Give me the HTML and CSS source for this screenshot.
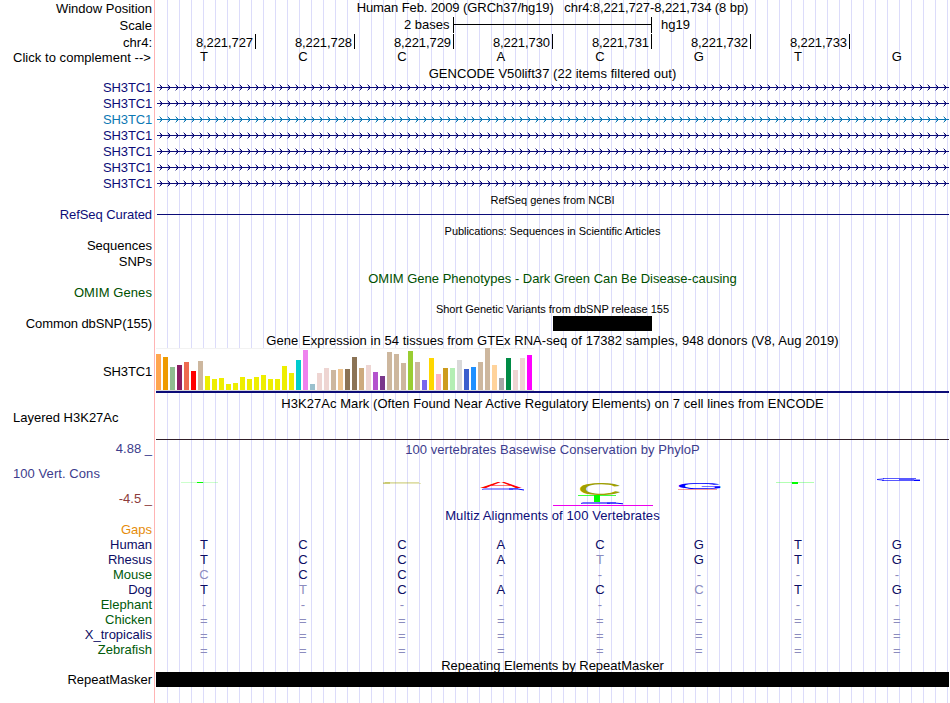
FILE: index.html
```html
<!DOCTYPE html>
<html lang="en">
<head>
<meta charset="utf-8">
<title>Genome Browser</title>
<link rel="stylesheet" href="styles.css">
</head>
<body>
<main class="browser">
  <div class="row position"><div class="label">Window Position</div><div class="plot title t-pos">Human Feb. 2009 (GRCh37/hg19)&nbsp;&nbsp; chr4:8,221,727-8,221,734 (8 bp)</div></div>
  <div class="row scale"><div class="label">Scale</div><div class="plot scale-plot"><span class="scale-size">2 bases</span><span class="scale-bar"></span><span>hg19</span></div></div>
  <div class="row ruler"><div class="label">chr4:</div><div class="plot ticks" id="ticks"></div></div>
  <div class="row bases"><div class="label t-click">Click to complement --&gt;</div><div class="plot cells" data-seq="TCCACGTG"></div></div>

  <div class="row head"><div class="label"></div><div class="plot title t-gencode">GENCODE V50lift37 (22 items filtered out)</div></div>
  <div id="genes"></div>

  <div class="row head refseq"><div class="label"></div><div class="plot title small">RefSeq genes from NCBI</div></div>
  <div class="row item navy"><div class="label t-refseq">RefSeq Curated</div><div class="plot"><div class="gene-line"></div></div></div>

  <div class="row head pubs"><div class="label"></div><div class="plot title small t-pubs">Publications: Sequences in Scientific Articles</div></div>
  <div class="row item"><div class="label">Sequences</div><div class="plot"></div></div>
  <div class="row item snps"><div class="label">SNPs</div><div class="plot"></div></div>

  <div class="row head omim green"><div class="label"></div><div class="plot title">OMIM Gene Phenotypes - Dark Green Can Be Disease-causing</div></div>
  <div class="row item green"><div class="label t-omim">OMIM Genes</div><div class="plot"></div></div>

  <div class="row head dbsnp"><div class="label"></div><div class="plot title small">Short Genetic Variants from dbSNP release 155</div></div>
  <div class="row item"><div class="label t-common">Common dbSNP(155)</div><div class="plot"><div class="variant"></div></div></div>

  <div class="row head gtex"><div class="label"></div><div class="plot title t-long">Gene Expression in 54 tissues from GTEx RNA-seq of 17382 samples, 948 donors (V8, Aug 2019)</div></div>
  <div class="row expression"><div class="label t-gene">SH3TC1</div><div class="plot expression-plot"><div class="bars" id="bars"></div></div></div>

  <div class="row head h3k"><div class="label"></div><div class="plot title t-long">H3K27Ac Mark (Often Found Near Active Regulatory Elements) on 7 cell lines from ENCODE</div></div>
  <div class="row layered"><div class="label left">Layered H3K27Ac</div><div class="plot signal"></div></div>

  <div class="row conservation">
    <div class="label cons-label"><span>4.88 _</span><span class="left t-cons">100 Vert. Cons</span><span class="low">-4.5 _</span></div>
    <div class="plot cons-plot">
      <div class="title cons-title t-long">100 vertebrates Basewise Conservation by PhyloP</div>
      <svg class="logo" viewBox="156 457 793 50" width="793" height="50">
        <g fill="#00ff00">
          <rect x="181" y="482" width="37" height="1" opacity=".2"/><rect x="197" y="482" width="6" height="1"/>
          <rect x="578" y="495" width="38" height="1" opacity=".75"/><rect x="594" y="495" width="6" height="7"/>
          <rect x="776" y="482" width="38" height="1" opacity=".3"/><rect x="792" y="482" width="6" height="2"/>
        </g>
        <g fill="#a0a000"><rect x="385" y="482" width="34" height="1" opacity=".35"/><rect x="383" y="483" width="38" height="1" opacity=".25"/><rect x="383" y="482" width="7" height="2" opacity=".35"/></g>
        <text class="glyph" fill="#ff0000" transform="translate(480 488.2) scale(.63 .09)">A</text>
        <text class="glyph" fill="#a0a000" transform="translate(577 494.8) scale(.63 .162)">C</text>
        <text class="glyph" fill="#0000ff" transform="translate(675.5 488.8) scale(.635 .096)">G</text>
        <g fill="none" stroke="#0000ff">
          <path d="M518 488.5H484L482 489.5H513" opacity=".4"/><path d="M509 489H518L524 490"/>
          <path d="M616 502.5H583L581 503.5H610" opacity=".55"/><path d="M607 503.2H617L623 503.8"/>
          <path d="M916 478.5H883M882 480.5H918" opacity=".65"/><path d="M884 478.7L877 479.5L884 480.4M899 479.5H914" opacity=".65"/><path d="M914 480.3H920" stroke-width="1.4"/>
        </g>
        <rect x="678" y="489" width="39" height="1" fill="#f00000" opacity=".4"/>
        <rect x="553" y="505" width="100" height="1" fill="#ee00ee"/>
      </svg>
    </div>
  </div>

  <div class="row head multiz navy"><div class="label"></div><div class="plot title t-multiz">Multiz Alignments of 100 Vertebrates</div></div>
  <div class="row gaps"><div class="label">Gaps</div><div class="plot"></div></div>
  <div id="species"></div>

  <div class="row head repeat"><div class="label"></div><div class="plot title">Repeating Elements by RepeatMasker</div></div>
  <div class="row item"><div class="label">RepeatMasker</div><div class="plot solid"></div></div>
</main>
<script src="app.js"></script>
</body>
</html>
```
FILE: styles.css
```css
* { box-sizing: border-box; }
body { margin: 0; background: #fff; }
.browser {
  position: relative;
  width: 949px;
  height: 703px;
  overflow: hidden;
  font: 13px/15px "Liberation Sans", Arial, sans-serif;
  color: #000;
  background:
    linear-gradient(#ffb4b4, #ffb4b4) 154px 0 / 1px 100% no-repeat,
    repeating-linear-gradient(90deg, transparent 0 11px, #dcdcfa 11px 12px) 156px 0 / 793px 100% no-repeat;
}
.row { display: grid; grid-template-columns: 156px 793px; }
.label { padding-right: 4px; text-align: right; white-space: pre; }
.plot { min-width: 0; }
.title { text-align: center; white-space: nowrap; }
.small { font-size: 11px; }
.left { text-align: left; padding-left: 13px; }
.navy { color: #0c0c78; }
.green { color: #005000; }

/* Tracking per caption */
.t-pos { letter-spacing: -.08px; }
.t-click { letter-spacing: .05px; padding-right: 5px; }
.t-gencode { letter-spacing: .05px; }
.t-gene { letter-spacing: -.15px; }
.t-refseq { letter-spacing: -.07px; }
.t-pubs { letter-spacing: -.04px; }
.t-omim { letter-spacing: .08px; }
.t-common { letter-spacing: -.1px; }
.t-long { letter-spacing: .058px; }
.t-cons { letter-spacing: .07px; }
.t-multiz { letter-spacing: .1px; }

.position { height: 17px; padding-top: 1px; }
.position .title { margin-top: -1px; }
.scale { height: 17px; }
.scale .label { padding-top: 1px; }
.scale-plot { display: flex; padding-left: 248px; }
.scale-size { width: 49px; white-space: nowrap; }
.scale-bar {
  width: 199px; height: 16px; margin-right: 9px;
  border: solid #000; border-width: 0 1px;
  background: linear-gradient(#000, #000) 0 7px / 100% 1px no-repeat;
}
.ruler { height: 16px; }
.ruler .label { padding-top: 1px; }
.ticks { display: flex; padding-left: 1px; letter-spacing: -.08px; }
.tick { width: 99px; height: 15px; padding: 1px 2px 0 0; border-right: 1px solid #000; text-align: right; }
.bases { height: 16px; }
.bases .cells { margin-top: -1px; }
.cells { display: grid; grid-template-columns: repeat(8, 99px); margin-left: -2px; padding-left: .4px; text-align: center; }

.head { height: 14px; }
.item { height: 15px; }
.gene { height: 16px; color: #0c0c78; }
.gene.alt { color: #0c78b4; }
.arrows { display: block; }
.refseq { margin-top: 1px; }
.gene-line { height: 1px; margin: 7px 0 0 1px; background: #0c0c78; }
.pubs { margin-top: 2px; }
.snps { height: 16px; padding-top: 1px; }
.omim { margin-top: 2px; }
.dbsnp { margin-top: 2px; }
.variant { width: 99px; height: 15px; margin-left: 397px; background: #000; }
.gtex { margin-top: 2px; }
.expression { height: 46px; }
.expression .label { padding-top: 17px; }
.expression-plot { padding-top: 1px; border-bottom: 2px solid #0c0c78; }
.bars {
  display: flex; align-items: flex-end; gap: 2px;
  width: 378px; height: 43px;
  background: #fff; border-top: 1px solid #f2f2f2; border-bottom: 1px solid #d8d8d8;
}
.bar { width: 5px; flex: none; }
.h3k { margin-top: 3px; }
.layered { height: 30px; }
.signal { border-bottom: 1px solid #301e28; }
.conservation { height: 67px; color: #3c3c8c; }
.cons-label { display: grid; grid-template-rows: 25px 25px 16px; padding-top: 1px; }
.cons-label .low { color: #8c3c3c; }
.cons-title { height: 17px; padding-top: 2px; }
.logo { display: block; }
.glyph { font: 100px "Liberation Sans", Arial, sans-serif; }
.multiz { margin-top: 1px; }
.gaps { height: 15px; color: #e68c0a; }
.species { height: 15px; color: #0c0c64; }
.species.far .label { color: #005a0a; }
.species .mut { color: #8c8cbe; }
.species .unaligned { padding-top: 1px; }
.repeat { margin-top: 1px; }
.solid { background: #000; }
```
FILE: app.js
```js
const add = (parent, cls, text) => {
  const el = document.createElement('div');
  el.className = cls;
  if (text !== undefined) el.textContent = text;
  parent.append(el);
  return el;
};

// Coordinate ruler
for (let n = 727; n <= 733; n++) add(document.getElementById('ticks'), 'tick', '8,221,' + n);

document.querySelectorAll('[data-seq]').forEach(row => {
  for (const base of row.dataset.seq) add(row, 'cell', base);
});

// Gene models with strand arrows every 8 pixels
const genes = document.getElementById('genes');
for (let i = 0; i < 7; i++) {
  const row = add(genes, 'row gene' + (i === 2 ? ' alt' : ''));
  add(row, 'label t-gene', 'SH3TC1');
  let heads = '', tails = '';
  for (let x = 3; x < 793; x += 8) {
    heads += `M${x + 1} 5h1v1h-1zM${x + 2} 6h1v1h-1zM${x + 2} 8h1v1h-1zM${x + 1} 9h1v1h-1z`;
    tails += `M${x} 4h1v1h-1zM${x} 10h1v1h-1zM${x + 1} 6h1v1h-1zM${x + 1} 8h1v1h-1z`;
  }
  add(row, 'plot').innerHTML =
    `<svg class="arrows" width="793" height="16" fill="currentColor" shape-rendering="crispEdges">
      <rect x="1" y="7" width="792" height="1"/><path d="${heads}"/><path d="${tails}" opacity=".4"/></svg>`;
}

// Tissue expression: height and colour
const tissues = `36 FFA54F,33 EE9A00,23 8FBC8F,25 8B1C62,28 EE6A50,19 FF0000,29 CDB79E,14 EEEE00,11 EEEE00,12 EEEE00,6 EEEE00,7 EEEE00,13 EEEE00,11 EEEE00,13 EEEE00,15 EEEE00,11 EEEE00,11 EEEE00,24 EEEE00,17 EEEE00,30 00CDCD,40 EE82EE,6 9AC0CD,17 EED5D2,22 EED5D2,20 CDB79E,21 EEC591,21 8B7355,33 8B7355,22 CDAA7D,25 EED5D2,18 B452CD,14 7A378B,38 CDB79E,36 CDB79E,27 CDB79E,39 9ACD32,28 CDB79E,10 7A67EE,32 FFD700,16 FFB6C1,22 CD9B1D,22 B4EEB4,30 D9D9D9,21 3A5FCD,23 1E90FF,28 CDB79E,42 CDB79E,25 FFD39B,12 A6A6A6,32 008B45,20 EED5D2,32 EED5D2,35 FF00FF`;
for (const item of tissues.split(',')) {
  const [height, color] = item.split(' ');
  const bar = add(document.getElementById('bars'), 'bar');
  bar.style.height = height + 'px';
  bar.style.background = '#' + color;
}

// Alignments; lower case marks a mismatch with the human base
const species = [
  ['Human', 'TCCACGTG'], ['Rhesus', 'TCCAtGTG'], ['Mouse', 'cCC-----', 1], ['Dog', 'TtCACcTG'],
  ['Elephant', '--------', 1], ['Chicken', '========', 1], ['X_tropicalis', '========'], ['Zebrafish', '========', 1]
];
for (const [name, seq, far] of species) {
  const row = add(document.getElementById('species'), 'row species' + (far ? ' far' : ''));
  add(row, 'label', name);
  const cells = add(row, 'plot cells');
  for (const c of seq) add(cells, 'cell' + (/[A-Z]/.test(c) ? '' : ' mut') + (c === '=' ? ' unaligned' : ''), c.toUpperCase());
}
```
